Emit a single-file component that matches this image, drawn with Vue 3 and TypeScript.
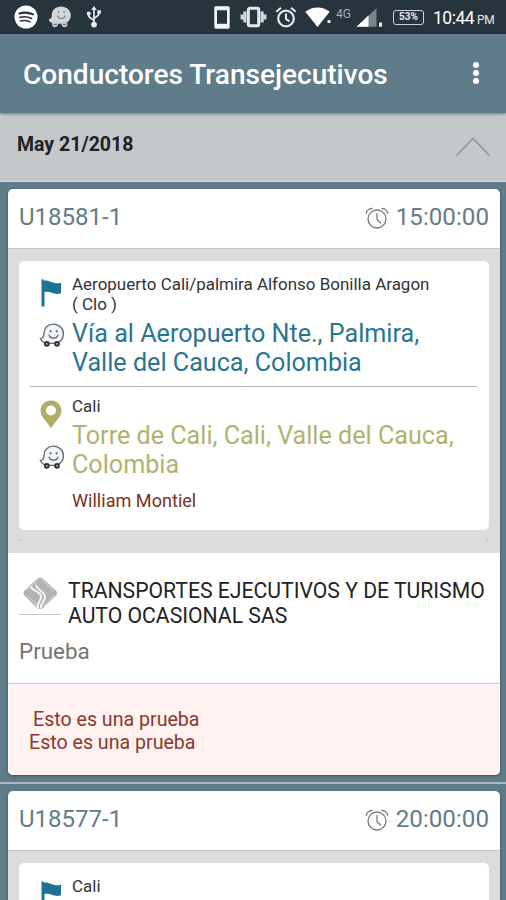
<script setup lang="ts">
interface Stop {
  place: string[]
  address: string[]
}
interface Trip {
  code: string
  time: string
  origin: Stop
  destination: Stop
  passenger: string
  company: string[]
  event: string
  notes: string[]
}

const company = ['TRANSPORTES EJECUTIVOS Y DE TURISMO', 'AUTO OCASIONAL SAS']
const trips: Trip[] = [
  {
    code: 'U18581-1',
    time: '15:00:00',
    origin: {
      place: ['Aeropuerto Cali/palmira Alfonso Bonilla Aragon', '( Clo )'],
      address: ['Vía al Aeropuerto Nte., Palmira,', 'Valle del Cauca, Colombia'],
    },
    destination: {
      place: ['Cali'],
      address: ['Torre de Cali, Cali, Valle del Cauca,', 'Colombia'],
    },
    passenger: 'William Montiel',
    company,
    event: 'Prueba',
    notes: ['Esto es una prueba', 'Esto es una prueba'],
  },
  {
    code: 'U18577-1',
    time: '20:00:00',
    origin: { place: ['Cali'], address: [] },
    destination: { place: [], address: [] },
    passenger: '',
    company: [],
    event: '',
    notes: [],
  },
]
</script>

<template>
  <div class="screen">
    <svg class="defs" width="0" height="0" aria-hidden="true">
      <symbol id="flag" viewBox="0 0 21 28">
        <path d="M.5.3h2v1.500c6-1.500 9.500 4.300 17.500 2v10.500c-7 2.500-11-2.800-16.500-1.200v14.500h-3z" fill="#1d7395" />
      </symbol>
      <symbol id="pin" viewBox="0 0 22 29">
        <path fill-rule="evenodd" d="M11 .5C5 .5.500 5 .500 10.600.500 17.500 7 21 11 28.500 15 21 21.500 17.500 21.500 10.600 21.500 5 17 .5 11 .5zM11 5.500a5 5 0 1 1 0 10 5 5 0 0 1 0-10z" fill="#aeb068" />
      </symbol>
      <symbol id="waze" viewBox="0 0 26 25">
        <path d="M14.500 1.200C8.800 1.200 5 5.200 5 10.300c0 3.200-.6 5-3.600 5.100 1.500 3.500 5 4.900 8.600 4.900h5.500c5.300 0 9-4.200 9-9.300 0-5.500-4.400-9.800-10-9.800z" fill="#f2f4f7" stroke="#626a73" stroke-width="1.300" />
        <circle cx="7.800" cy="20.800" r="2.900" fill="#30343a" /><circle cx="18" cy="20.800" r="2.900" fill="#30343a" />
        <circle cx="7.800" cy="20.800" r=".9" fill="#c8ccd0" /><circle cx="18" cy="20.800" r=".9" fill="#c8ccd0" />
        <circle cx="11.500" cy="8.300" r="1.100" fill="#555d66" /><circle cx="17.700" cy="8.300" r="1.100" fill="#555d66" />
        <path d="M10 12c1.300 4.200 7.600 4.200 9 0" fill="none" stroke="#555d66" stroke-width="1.200" stroke-linecap="round" />
      </symbol>
      <symbol id="clock" viewBox="0 0 24 24">
        <g fill="none" stroke="currentColor" stroke-width="1.300" stroke-linecap="round">
          <circle cx="12" cy="13" r="9" /><path d="M12 7.500v6l3.500 3.500M1.300 7.300C1.500 4.800 4 2.300 7 2.500M22.700 7.300C22.500 4.800 20 2.300 17 2.500" />
        </g>
      </symbol>
    </svg>

    <div class="status">
      <svg class="s-spotify" viewBox="0 0 24 24">
        <circle cx="12" cy="12" r="11.500" fill="#fff" />
        <g fill="none" stroke="#26343e" stroke-linecap="round"><path d="M5.500 8.400c4.500-1.300 9.500-.9 13.500 1" stroke-width="2.100" /><path d="M6 12.400c4-1.100 8-.7 11.600 1" stroke-width="1.700" /><path d="M6.500 16c3.400-.8 6.700-.5 9.700.9" stroke-width="1.500" /></g>
      </svg>
      <svg class="s-waze" viewBox="0 0 24 22">
        <path d="M13 .5C7.500.5 3.800 4.300 3.800 8.800c0 2.800-.6 4.500-3.300 4.700 1 2.500 3 3.600 5.300 4.200h9c4.500 0 8-3.800 8-8.400C22.800 4.300 18.500.5 13 .5z" fill="#d3d6d9" />
        <circle cx="7" cy="18.300" r="2.900" fill="#c3c7ca" /><circle cx="16.500" cy="18.300" r="2.900" fill="#c3c7ca" />
        <path d="M10.500 5v2M16 5v2M9.500 9.500c1 4 6.500 4 7.800 0" fill="none" stroke="#7d858b" stroke-width="1.200" />
        <path d="M5.500 18.500h3M15 18.500h3" stroke="#68747c" stroke-width="1.200" />
      </svg>
      <svg class="s-usb" viewBox="0 0 16 22">
        <path d="M8 3v15M8 15.200c0-3-5.500-2-5.500-6.500M8 13c0-2.500 5-1.500 5-6" fill="none" stroke="#e6e9eb" stroke-width="1.700" />
        <path d="M8 0l2.800 4H5.200zM11.300 4.300h3.600v3.500h-3.600z" fill="#e6e9eb" /><circle cx="2.700" cy="7.600" r="2" fill="#e6e9eb" /><circle cx="8" cy="18.600" r="2.900" fill="#e6e9eb" />
      </svg>
      <svg class="s-phone" viewBox="0 0 16 23"><path fill-rule="evenodd" d="M2 .3h12c1 0 1.700.6 1.700 1.700v19c0 1-.7 1.700-1.700 1.700H2C1 22.700.300 22 .300 21V2C.300.900 1 .3 2 .3zM3 4.300v13.500h10V4.300z" fill="#f3f4f5" /></svg>
      <svg class="s-vibrate" viewBox="0 0 27 22"><rect x="8.300" y="2.300" width="10.400" height="17.400" rx="1.500" fill="none" stroke="#e5e8ea" stroke-width="3" /><path d="M3.300 5.500h3.200v11H3.300zM.500 8.500h2.800v5H.500zM20.500 5.500h3.200v11h-3.200zM23.700 8.500h2.800v5h-2.800z" fill="#d2d6d9" /></svg>
      <svg class="s-alarm" viewBox="0 0 22 22"><circle cx="11" cy="12.500" r="7.800" fill="none" stroke="#e5e8ea" stroke-width="2.200" /><path d="M11 7.500v5.500l3.500 2.300M1.300 5.700l4.700-4M20.700 5.700l-4.700-4" fill="none" stroke="#e5e8ea" stroke-width="2" /></svg>
      <svg class="s-wifi" viewBox="0 0 27 21"><path d="M.3 4.800C7.500-1 17.500-1 24.700 4.800L12.500 20z" fill="#fff" /><rect x="22.500" y="13" width="3" height="3" fill="#e4e7e9" /></svg>
      <span class="net">4G</span>
      <svg class="s-signal" viewBox="0 0 28 20"><path d="M20.500.3v18.500H.500z" fill="#7a838a" /><path d="M12.500 7.600v11.200H.500z" fill="#fff" /><path d="M23 14.500h3v4.300h-3z" fill="#e5e8ea" /></svg>
      <div class="battery">53%</div>
      <span class="hour">10:44</span><span class="pm">PM</span>
    </div>

    <header class="bar">
      <h1>Conductores Transejecutivos</h1>
      <div class="dots"><i></i><i></i><i></i></div>
    </header>

    <div class="day">
      <span>May 21/2018</span>
      <svg viewBox="0 0 36 20"><path d="M1.500 18.500 18 1.500 34.500 18.500" fill="none" stroke="#91989b" stroke-width="1.700" /></svg>
    </div>

    <main class="list">
      <div v-for="trip in trips" :key="trip.code" class="slot">
        <article class="card">
          <div class="head">
            <span class="code">{{ trip.code }}</span>
            <svg class="clock"><use href="#clock" /></svg>
            <span class="time">{{ trip.time }}</span>
          </div>
          <div class="route">
            <div class="panel">
              <section class="stop origin">
                <div class="icons"><svg class="flag"><use href="#flag" /></svg><svg class="waze"><use href="#waze" /></svg></div>
                <div class="texts">
                  <div class="place"><div v-for="(l, i) in trip.origin.place" :key="i">{{ l }}</div></div>
                  <div class="address"><div v-for="(l, i) in trip.origin.address" :key="i">{{ l }}</div></div>
                </div>
              </section>
              <section v-if="trip.destination.place.length" class="stop destination">
                <div class="icons"><svg class="pin"><use href="#pin" /></svg><svg class="waze"><use href="#waze" /></svg></div>
                <div class="texts">
                  <div class="place"><div v-for="(l, i) in trip.destination.place" :key="i">{{ l }}</div></div>
                  <div class="address"><div v-for="(l, i) in trip.destination.address" :key="i">{{ l }}</div></div>
                  <div class="passenger">{{ trip.passenger }}</div>
                </div>
              </section>
            </div>
            <div class="corners">
              <svg viewBox="0 0 4 3"><path d="M.5.5 3 2" stroke="#b5b5b5" /></svg>
              <svg viewBox="0 0 4 3"><path d="M1 2 3.500.5" stroke="#b5b5b5" /></svg>
            </div>
          </div>
          <div v-if="trip.company.length" class="client">
            <div class="firm">
              <svg class="logo" viewBox="0 0 42 40">
                <path d="M18.500 1.500Q21 0 23.500 1.500L37 13.500Q39 16 37 18.500L24 31Q21 33 18 31L5.500 18.500Q3.500 16 5.500 13.500z" fill="#b3b3b3" />
                <path d="M7 13.500 19 3M8 18l11 11M23 3l12 11M25 29l10-11" stroke="#d8d8d8" fill="none" />
                <path d="M12 9.500c1 5 11 5 10 11-.5 4-5 6-3 11M17 8c1 5 10 7 9 13-.5 4-5 5-4 10" stroke="#f6f6f6" stroke-width="2" fill="none" />
                <path d="M0 37.500h42" stroke="#c4c4c4" />
              </svg>
              <div class="company"><div v-for="(l, i) in trip.company" :key="i">{{ l }}</div></div>
            </div>
            <div class="event">{{ trip.event }}</div>
          </div>
          <div v-if="trip.notes.length" class="notes"><div v-for="(l, i) in trip.notes" :key="i" :class="'n' + i">{{ l }}</div></div>
        </article>
      </div>
    </main>
  </div>
</template>

<style>
html, body { margin: 0; overflow: hidden; }
</style>

<style scoped>
.screen { width: 506px; height: 900px; overflow: hidden; background: #5f7c8a; font-family: Roboto, sans-serif; display: flex; flex-direction: column; white-space: nowrap; }
.screen * { box-sizing: border-box; }
svg { display: block; flex: none; }
.defs { position: absolute; }
.status { height: 34px; flex: none; background: #26343e; display: flex; align-items: center; padding-left: 14px; color: #e6e9eb; }
.s-spotify { width: 24px; height: 24px; }
.s-waze { width: 24px; height: 22px; margin-left: 10px; }
.s-usb { width: 16px; height: 22px; margin-left: 14px; }
.s-phone { width: 16px; height: 23px; margin-left: 112px; }
.s-vibrate { width: 27px; height: 22px; margin-left: 10px; }
.s-alarm { width: 22px; height: 22px; margin-left: 8px; }
.s-wifi { width: 27px; height: 21px; margin-left: 8px; }
.net { font-size: 12px; line-height: 14px; margin: -7px 0 0 4px; color: #a4acb1; width: 16px; }
.s-signal { width: 28px; height: 20px; margin-left: 4px; margin-top: 2px; }
.battery { width: 31px; height: 15px; border: 1.500px solid #cdd2d5; border-radius: 3px; margin-left: 9px; font-size: 10px; font-weight: 700; line-height: 12px; text-align: center; }
.hour { font-size: 17.500px; line-height: 22px; margin-left: 9px; margin-top: 2px; letter-spacing: -.5px; color: #fff; }
.pm { font-size: 12px; line-height: 14px; margin: 5px 0 0 3px; letter-spacing: -.5px; }
.bar { height: 79px; flex: none; background: #5f7c8b; display: flex; justify-content: space-between; align-items: center; padding: 2px 27px 0 23px; position: relative; box-shadow: 0 1px 3px #0006; }
h1 { margin: 0; font-size: 28.050px; line-height: 32px; font-weight: 500; color: #fff; }
.dots { display: flex; flex-direction: column; gap: 2.400px; margin-bottom: 3px; }
.dots i { width: 6px; height: 6px; border-radius: 50%; background: #fff; }
.day { height: 69px; flex: none; background: #c4c8cb; border-bottom: 1px solid #d3d9dc; display: flex; justify-content: space-between; padding: 20px 15px 0 17px; font-size: 19.500px; line-height: 22px; font-weight: 700; color: #1d2226; }
.day span { margin-top: 1px; }
.day svg { width: 36px; height: 20px; margin-top: 4px; }
.list { flex: none; padding-top: 1px; }
.slot { padding: 6px 6px 7px 8px; border-bottom: 2px solid #a9bac3; }
.slot + .slot { padding-top: 7px; }
.card { border-radius: 5px; overflow: hidden; background: #fff; box-shadow: 0 1px 3px #0006; }
.head { height: 60px; border-bottom: 1px solid #c5c5c5; display: flex; padding: 13px 11px 0 11px; font-size: 24px; line-height: 30px; color: #637d86; }
.time { font-size: 24.200px; }
.clock { width: 24px; height: 24px; color: #777; margin: 4px 7px 0 auto; }
.route { background: #dcdcdc; padding: 12px 11px 11px; }
.corners { display: flex; justify-content: space-between; padding-top: 9px; }
.corners svg { width: 4px; height: 3px; }
.panel { background: #fff; border-radius: 5px; padding: 0 12px 19px 11px; }
.stop { display: flex; padding-left: 9px; }
.origin { padding-top: 14px; }
.destination { border-top: 1px solid #b4b4b4; margin-top: 8px; padding-top: 10px; }
.icons { width: 33px; flex: none; }
.flag { width: 21px; height: 28px; margin: 4px 0 0 2px; }
.waze { width: 26px; height: 25px; margin-top: 16px; }
.pin { width: 22px; height: 29px; margin: 3px 0 0 1px; }
.place { font-size: 16.980px; line-height: 19.500px; color: #333; }
.address { font-size: 25.150px; line-height: 29.300px; margin-top: 5px; color: #2a7591; }
.destination .address { color: #b0b36d; }
.passenger { font-size: 18.100px; line-height: 20px; margin-top: 11px; color: #7b3024; }
.client { height: 130px; padding: 24px 11px 0; }
.firm { display: flex; }
.logo { width: 42px; height: 40px; }
.company { font-size: 21.180px; line-height: 25px; margin: 1px 0 0 7px; color: #222; }
.event { font-size: 22.400px; line-height: 28px; margin-top: 9px; color: #757575; }
.notes { height: 92px; background: #fff2f0; border-top: 1px solid #ccc; padding: 24px 0 0 21px; font-size: 19.600px; line-height: 23px; color: #8a392d; }
.n0 { padding-left: 4px; }
</style>
